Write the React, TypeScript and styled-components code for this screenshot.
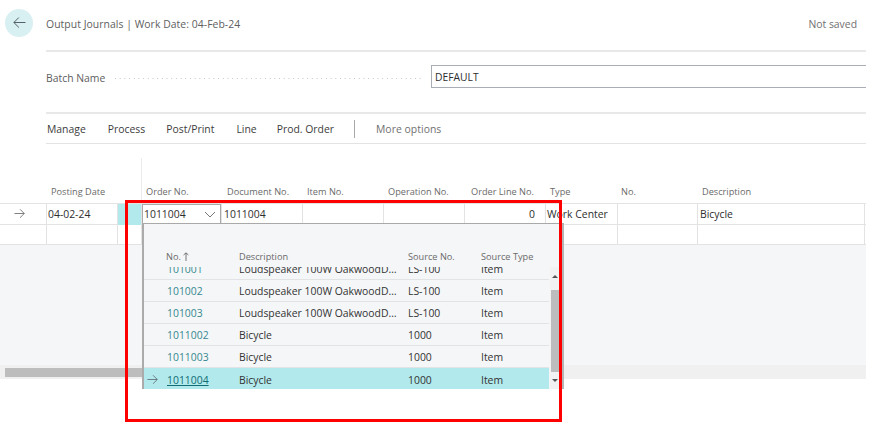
import React from 'react';
import styled, { createGlobalStyle } from 'styled-components';

const GlobalStyle = createGlobalStyle`
  html, body {
    margin: 0;
    padding: 0;
    background: #fff;
  }
  * {
    box-sizing: border-box;
  }
`;

const FONT = `"Open Sans", "Noto Sans", sans-serif`;
const GRID_COLUMNS = '47px 71px 24px 80px 81px 81px 81px 81px 72px 80px 167px 1px';
const LOOKUP_COLUMNS = '22px 73px 169px 73px 1fr';

const Page = styled.div`
  position: relative;
  width: 871px;
  height: 431px;
  overflow: hidden;
  background: #fff;
  font-family: ${FONT};
  font-size: 10.5px;
  color: #2e2e2e;
`;

const TopBar = styled.div`
  display: flex;
  align-items: center;
  height: 50px;
  padding: 0 14px 5px 5px;
`;

const BackButton = styled.div`
  display: flex;
  align-items: center;
  justify-content: center;
  width: 28px;
  height: 28px;
  border-radius: 50%;
  background: #d9f0f2;
  color: #505c66;
  margin-right: 13px;
`;

const PageTitle = styled.div`
  flex: 1;
  margin-top: 3px;
  color: #606060;
  font-size: 10.4px;
  letter-spacing: 0.05px;
`;

const SaveState = styled.div`
  margin-top: 3px;
  color: #707070;
  font-size: 10.4px;
`;

const Content = styled.div`
  margin: 0 5px 0 46px;
`;

const Rule = styled.div<{ $thin?: boolean }>`
  height: ${(p) => (p.$thin ? 1 : 2)}px;
  background: ${(p) => (p.$thin ? '#e3e3e3' : '#e8e8e8')};
`;

const BatchRow = styled.div`
  display: flex;
  align-items: center;
  height: 60px;
  padding-bottom: 11px;
`;

const BatchLabel = styled.div`
  width: 69px;
  margin-top: 2px;
  color: #606060;
  font-size: 10.4px;
`;

const Leader = styled.div`
  flex: 1;
  height: 1px;
  margin: 3px 9px 0 0;
  background-image: linear-gradient(to right, #c4c4c4 1px, transparent 1px);
  background-size: 4.7px 1px;
`;

const BatchInput = styled.div`
  width: 435px;
  height: 23px;
  padding-left: 3px;
  line-height: 23px;
  border: 1px solid #a9aeb6;
  border-right: none;
  font-size: 10.3px;
  color: #2e2e2e;
`;

const ActionBar = styled.div`
  display: flex;
  align-items: center;
  height: 29px;
  padding-left: 1px;
  color: #3c3c3c;
  font-size: 10.4px;
`;

const Action = styled.div<{ $gap: number }>`
  margin-right: ${(p) => p.$gap}px;
`;

const ActionDivider = styled.div`
  width: 1px;
  height: 18px;
  margin-right: 21px;
  background: #a8a8a8;
`;

const MoreOptions = styled.div`
  color: #707070;
  letter-spacing: 0.04px;
`;

const GridHeader = styled.div`
  display: grid;
  grid-template-columns: ${GRID_COLUMNS};
  height: 59px;
`;

const HeadCell = styled.div<{ $divider?: boolean; $indent?: number }>`
  display: flex;
  align-items: flex-end;
  height: ${(p) => (p.$divider ? 45 : 59)}px;
  margin-top: ${(p) => (p.$divider ? 14 : 0)}px;
  margin-left: ${(p) => (p.$divider ? -1 : 0)}px;
  padding: 0 0 5px ${(p) => (p.$divider ? 4 : p.$indent ?? 4)}px;
  color: #6a6a6a;
  font-size: 9.2px;
  white-space: nowrap;
  border-left: ${(p) => (p.$divider ? '1px solid #ececec' : 'none')};
`;

const GridRow = styled.div<{ $height: number }>`
  display: grid;
  grid-template-columns: ${GRID_COLUMNS};
  width: 866px;
  height: ${(p) => p.$height}px;
  border-top: 1px solid #e3e3e3;
`;

const Cell = styled.div<{ $accent?: boolean; $right?: boolean; $tight?: boolean }>`
  display: flex;
  align-items: center;
  justify-content: ${(p) => (p.$right ? 'flex-end' : 'flex-start')};
  padding: 0 ${(p) => (p.$right ? 10 : 3)}px 2px ${(p) => (p.$tight ? 1 : 2)}px;
  border-right: 1px solid #e3e3e3;
  background: ${(p) => (p.$accent ? '#b2e9ec' : 'transparent')};
  font-size: 10.4px;
  white-space: nowrap;
`;

const MarkerCell = styled(Cell)`
  justify-content: center;
  padding: 0 8px 2px 0;
  color: #666;
`;

const OrderCell = styled(Cell)`
  display: block;
  padding: 0;
`;

const OrderInput = styled.div`
  display: flex;
  align-items: center;
  justify-content: space-between;
  height: 21px;
  padding: 0 4px 2px 1px;
  border: 1px solid #a9a9a9;
  border-bottom: none;
  font-size: 10.4px;
`;

const EmptyArea = styled.div`
  width: 866px;
  height: 121px;
  background: #f5f6f8;
  border-top: 1px solid #e3e3e3;
`;

const HScrollTrack = styled.div`
  width: 866px;
  height: 14px;
  padding: 3px 0 2px 5px;
  background: #f0f0f0;
`;

const HScrollThumb = styled.div`
  width: 300px;
  height: 9px;
  background: #bdbdbd;
`;

const Lookup = styled.div`
  position: absolute;
  left: 142px;
  top: 223px;
  width: 422px;
  height: 166px;
  display: flex;
  flex-direction: column;
  background: #f5f6f8;
  border-left: 2px solid #ababab;
  border-right: 2px solid #b5b5b5;
  border-top: 1px solid #a9a9a9;
`;

const LookupHead = styled.div`
  display: grid;
  grid-template-columns: ${LOOKUP_COLUMNS};
  width: 405px;
  height: 43px;
  flex: none;
  padding-bottom: 4px;
  align-items: flex-end;
  color: #6a6a6a;
  font-size: 9.2px;
`;

const LookupHeadCell = styled.div`
  display: flex;
  align-items: center;
  gap: 2px;
  white-space: nowrap;
`;

const LookupBody = styled.div`
  flex: 1;
  min-height: 0;
  display: flex;
`;

const LookupRows = styled.div`
  width: 405px;
  display: flex;
  flex-direction: column;
  justify-content: flex-end;
  overflow: hidden;
`;

const LookupRow = styled.div<{ $selected?: boolean }>`
  display: grid;
  flex: none;
  grid-template-columns: ${LOOKUP_COLUMNS};
  align-items: center;
  height: ${(p) => (p.$selected ? 21 : 22)}px;
  padding-top: ${(p) => (p.$selected ? 2 : 1)}px;
  border-bottom: ${(p) => (p.$selected ? 'none' : '1px solid #e2e3e5')};
  background: ${(p) => (p.$selected ? '#b2e9ec' : 'transparent')};
  font-size: 10.4px;
  color: #333;
`;

const LookupMarker = styled.div`
  display: flex;
  justify-content: center;
  padding-right: 6px;
  color: #5c6a70;
`;

const LookupLink = styled.div<{ $selected?: boolean }>`
  padding-left: 1px;
  color: ${(p) => (p.$selected ? '#0f6d73' : '#34898e')};
  text-decoration: ${(p) => (p.$selected ? 'underline' : 'none')};
`;

const Truncated = styled.div`
  overflow: hidden;
  padding-right: 6px;
  white-space: nowrap;
  text-overflow: ellipsis;
`;

const VScroll = styled.div`
  width: 9px;
  margin-left: 1px;
  display: flex;
  flex-direction: column;
  align-items: center;
  background: #f2f2f2;
`;

const ScrollArrow = styled.div<{ $down?: boolean }>`
  flex: none;
  width: 0;
  height: 0;
  margin: ${(p) => (p.$down ? '7px 0 0' : '8px 0 12px')};
  border-left: 3px solid transparent;
  border-right: 3px solid transparent;
  border-${(p) => (p.$down ? 'top' : 'bottom')}: 3px solid #555;
`;

const VThumb = styled.div`
  flex: none;
  width: 8px;
  height: 82px;
  background: #bdbdbd;
`;

const Annotation = styled.div`
  position: absolute;
  left: 125px;
  top: 200px;
  width: 437px;
  height: 222px;
  border: 3px solid #f00;
  pointer-events: none;
`;

const ThinArrow = ({ left, size = 12 }: { left?: boolean; size?: number }) => (
  <svg width={size} height={size} viewBox="0 0 12 12" fill="none" stroke="currentColor" strokeWidth="0.9">
    {left ? <path d="M11.5 6H.8M5.4 1.4 .8 6l4.6 4.6" /> : <path d="M.5 6h10.7M6.6 1.4 11.2 6l-4.6 4.6" />}
  </svg>
);

const Chevron = () => (
  <svg width="12" height="7" viewBox="0 0 12 7" fill="none" stroke="#666" strokeWidth="0.9">
    <path d="M1 1l5 5 5-5" />
  </svg>
);

const SortUp = () => (
  <svg width="6" height="9" viewBox="0 0 6 9" fill="none" stroke="#666" strokeWidth="0.9">
    <path d="M3 9V1M.6 3 3 .8 5.4 3" />
  </svg>
);

const gridHeads = [
  { label: 'Posting Date', indent: 4 },
  { label: '', indent: 4 },
  { label: 'Order No.', indent: 4, divider: true },
  { label: 'Document No.', indent: 5 },
  { label: 'Item No.', indent: 4 },
  { label: 'Operation No.', indent: 4 },
  { label: 'Order Line No.', indent: 6 },
  { label: 'Type', indent: 4 },
  { label: 'No.', indent: 3 },
  { label: 'Description', indent: 4 },
];

const lookupRows = [
  { no: '101001', description: 'Loudspeaker 100W OakwoodDeluxe', source: 'LS-100' },
  { no: '101002', description: 'Loudspeaker 100W OakwoodDeluxe', source: 'LS-100' },
  { no: '101003', description: 'Loudspeaker 100W OakwoodDeluxe', source: 'LS-100' },
  { no: '1011002', description: 'Bicycle', source: '1000' },
  { no: '1011003', description: 'Bicycle', source: '1000' },
  { no: '1011004', description: 'Bicycle', source: '1000', selected: true },
];

export default function App() {
  return (
    <Page>
      <GlobalStyle />
      <TopBar>
        <BackButton>
          <ThinArrow left size={13} />
        </BackButton>
        <PageTitle>Output Journals | Work Date: 04-Feb-24</PageTitle>
        <SaveState>Not saved</SaveState>
      </TopBar>
      <Content>
        <Rule />
        <BatchRow>
          <BatchLabel>Batch Name</BatchLabel>
          <Leader />
          <BatchInput>DEFAULT</BatchInput>
        </BatchRow>
        <Rule />
        <ActionBar>
          <Action $gap={22}>Manage</Action>
          <Action $gap={21}>Process</Action>
          <Action $gap={22}>Post/Print</Action>
          <Action $gap={20}>Line</Action>
          <Action $gap={20}>Prod. Order</Action>
          <ActionDivider />
          <MoreOptions>More options</MoreOptions>
        </ActionBar>
        <Rule $thin />
      </Content>

      <GridHeader>
        <HeadCell />
        {gridHeads.map((head, i) => (
          <HeadCell key={i} $divider={head.divider} $indent={head.indent}>
            {head.label}
          </HeadCell>
        ))}
      </GridHeader>
      <GridRow $height={21}>
        <MarkerCell>
          <ThinArrow size={11} />
        </MarkerCell>
        <Cell $tight>04-02-24</Cell>
        <Cell $accent />
        <OrderCell>
          <OrderInput>
            1011004
            <Chevron />
          </OrderInput>
        </OrderCell>
        <Cell>1011004</Cell>
        <Cell />
        <Cell />
        <Cell $right>0</Cell>
        <Cell $tight>Work Center</Cell>
        <Cell />
        <Cell>Bicycle</Cell>
      </GridRow>
      <GridRow $height={20}>
        {Array.from({ length: 11 }, (_, i) => (
          <Cell key={i} />
        ))}
      </GridRow>
      <EmptyArea />
      <HScrollTrack>
        <HScrollThumb />
      </HScrollTrack>

      <Lookup>
        <LookupHead>
          <span />
          <LookupHeadCell>
            No.
            <SortUp />
          </LookupHeadCell>
          <LookupHeadCell>Description</LookupHeadCell>
          <LookupHeadCell>Source No.</LookupHeadCell>
          <LookupHeadCell>Source Type</LookupHeadCell>
        </LookupHead>
        <LookupBody>
          <LookupRows>
            {lookupRows.map((row) => (
              <LookupRow key={row.no} $selected={row.selected}>
                <LookupMarker>{row.selected && <ThinArrow size={11} />}</LookupMarker>
                <LookupLink $selected={row.selected}>
                  <span>{row.no}</span>
                </LookupLink>
                <Truncated>{row.description}</Truncated>
                <div>{row.source}</div>
                <div>Item</div>
              </LookupRow>
            ))}
          </LookupRows>
          <VScroll>
            <ScrollArrow />
            <VThumb />
            <ScrollArrow $down />
          </VScroll>
        </LookupBody>
      </Lookup>

      <Annotation />
    </Page>
  );
}
